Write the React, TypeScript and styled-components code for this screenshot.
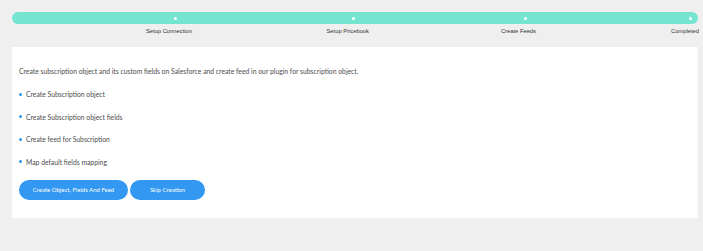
import styled, { createGlobalStyle } from "styled-components";

const GlobalStyle = createGlobalStyle`
  html, body {
    margin: 0;
    padding: 0;
    background: #efefef;
  }
  body {
    font-family: Lato, "Open Sans", sans-serif;
  }
`;

const steps = [
  { label: "Setup Connection", dot: 163 },
  { label: "Setup Pricebook", dot: 341 },
  { label: "Create Feeds", dot: 513 },
  { label: "Completed", dot: 678 },
];

const tasks = [
  "Create Subscription object",
  "Create Subscription object fields",
  "Create feed for Subscription",
  "Map default fields mapping",
];

export default function App() {
  return (
    <Page>
      <GlobalStyle />
      <Progress>
        <Bar>
          {steps.map((s) => (
            <Dot key={s.label} $x={s.dot} />
          ))}
        </Bar>
        <Labels>
          {steps.map((s) => (
            <Label key={s.label}>{s.label}</Label>
          ))}
        </Labels>
      </Progress>
      <Card>
        <Intro>
          Create subscription object and its custom fields on Salesforce and
          create feed in our plugin for subscription object.
        </Intro>
        <TaskList>
          {tasks.map((t) => (
            <Task key={t}>{t}</Task>
          ))}
        </TaskList>
        <Actions>
          <Button $width={109}>Create Object, Fields And Feed</Button>
          <Button $width={75}>Skip Creation</Button>
        </Actions>
      </Card>
    </Page>
  );
}

const Page = styled.div`
  padding: 12px 5px 0 12px;
  min-height: 239px;
`;

const Progress = styled.div`
  display: flex;
  flex-direction: column;
`;

const Bar = styled.div`
  position: relative;
  height: 12px;
  border-radius: 6px;
  background: #75e4d0;
  width: 686px;
`;

const Dot = styled.span<{ $x: number }>`
  position: absolute;
  top: 4.5px;
  left: ${({ $x }) => $x - 1.5}px;
  width: 3px;
  height: 3px;
  border-radius: 50%;
  background: #fff;
`;

const Labels = styled.div`
  display: grid;
  grid-template-columns: 180px 177px 167px 163px;
  justify-items: end;
  margin-top: 2px;
`;

const Label = styled.span`
  font-family: "Liberation Sans", Arial, sans-serif;
  font-size: 5.8px;
  line-height: 10px;
  color: #333;
`;

const Card = styled.div`
  margin-top: 11px;
  width: 685px;
  height: 171px;
  box-sizing: border-box;
  padding: 19px 7px 0;
  background: #fff;
  box-shadow: 1px 0 0 #f6f6f6, 2px 0 0 #f3f3f3;
  color: #4d4d4d;
  font-size: 6.8px;
`;

const Intro = styled.p`
  margin: 0;
  line-height: 10px;
`;

const TaskList = styled.ul`
  list-style: none;
  margin: 0;
  padding: 0;
  display: flex;
  flex-direction: column;
  gap: 12.5px;
  margin-top: 13px;
`;

const Task = styled.li`
  display: flex;
  align-items: center;
  gap: 4px;
  line-height: 10px;

  &::before {
    content: "";
    flex: none;
    width: 3px;
    height: 3px;
    border-radius: 50%;
    background: #2f97ef;
  }
`;

const Actions = styled.div`
  display: flex;
  gap: 2px;
  margin-top: 13px;
`;

const Button = styled.button<{ $width: number }>`
  width: ${({ $width }) => $width}px;
  height: 20px;
  border: none;
  border-radius: 10px;
  padding: 0;
  background: #3298f2;
  color: #fff;
  font-family: Lato, "Open Sans", sans-serif;
  font-size: 6px;
  cursor: pointer;
`;
